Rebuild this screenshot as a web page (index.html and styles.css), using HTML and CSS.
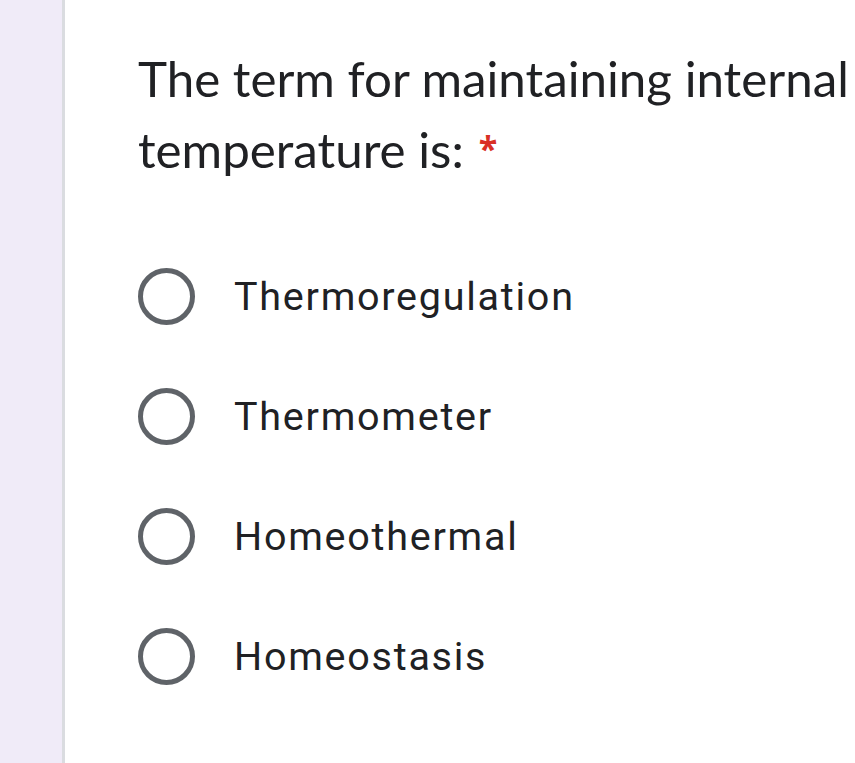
FILE: index.html
```html
<!DOCTYPE html>
<html>
<head>
<meta charset="utf-8">
<link rel="stylesheet" href="styles.css">
</head>
<body>
<div class="page">
  <div class="side"></div>
  <main class="card">
    <h1 class="question">The term for maintaining internal temperature is:<span class="req">*</span></h1>
    <ul class="options">
      <li class="option"><span class="radio"></span><span class="label">Thermoregulation</span></li>
      <li class="option"><span class="radio"></span><span class="label">Thermometer</span></li>
      <li class="option"><span class="radio"></span><span class="label">Homeothermal</span></li>
      <li class="option"><span class="radio"></span><span class="label">Homeostasis</span></li>
    </ul>
  </main>
</div>
</body>
</html>
```
FILE: styles.css
```css
html, body {
  margin: 0;
  padding: 0;
  background: #ffffff;
  overflow: hidden;
}
.page {
  display: flex;
  min-height: 763px;
}
.side {
  width: 62px;
  flex: none;
  background: #f0ebf8;
  border-right: 3px solid #dadce0;
}
.card {
  flex: 1;
  padding-left: 73px;
  padding-top: 43px;
}
.question {
  margin: 0;
  width: 720px;
  font-family: Lato, sans-serif;
  font-weight: 400;
  font-size: 49.3px;
  line-height: 71px;
  color: #202124;
}
.req {
  color: #d93025;
  font-size: 34px;
  font-weight: 700;
  margin-left: 15px;
  vertical-align: 7px;
  font-family: "Open Sans", sans-serif;
  line-height: 1;
}
.options {
  list-style: none;
  margin: 51px 0 0;
  padding: 0;
}
.option {
  display: flex;
  align-items: center;
  height: 120px;
}
.radio {
  box-sizing: border-box;
  width: 57px;
  height: 57px;
  border: 5px solid #5f6368;
  border-radius: 50%;
  flex: none;
}
.label {
  margin-left: 39px;
  font-family: Roboto, sans-serif;
  font-size: 39.5px;
  color: #202124;
  letter-spacing: 1.75px;
}
```
